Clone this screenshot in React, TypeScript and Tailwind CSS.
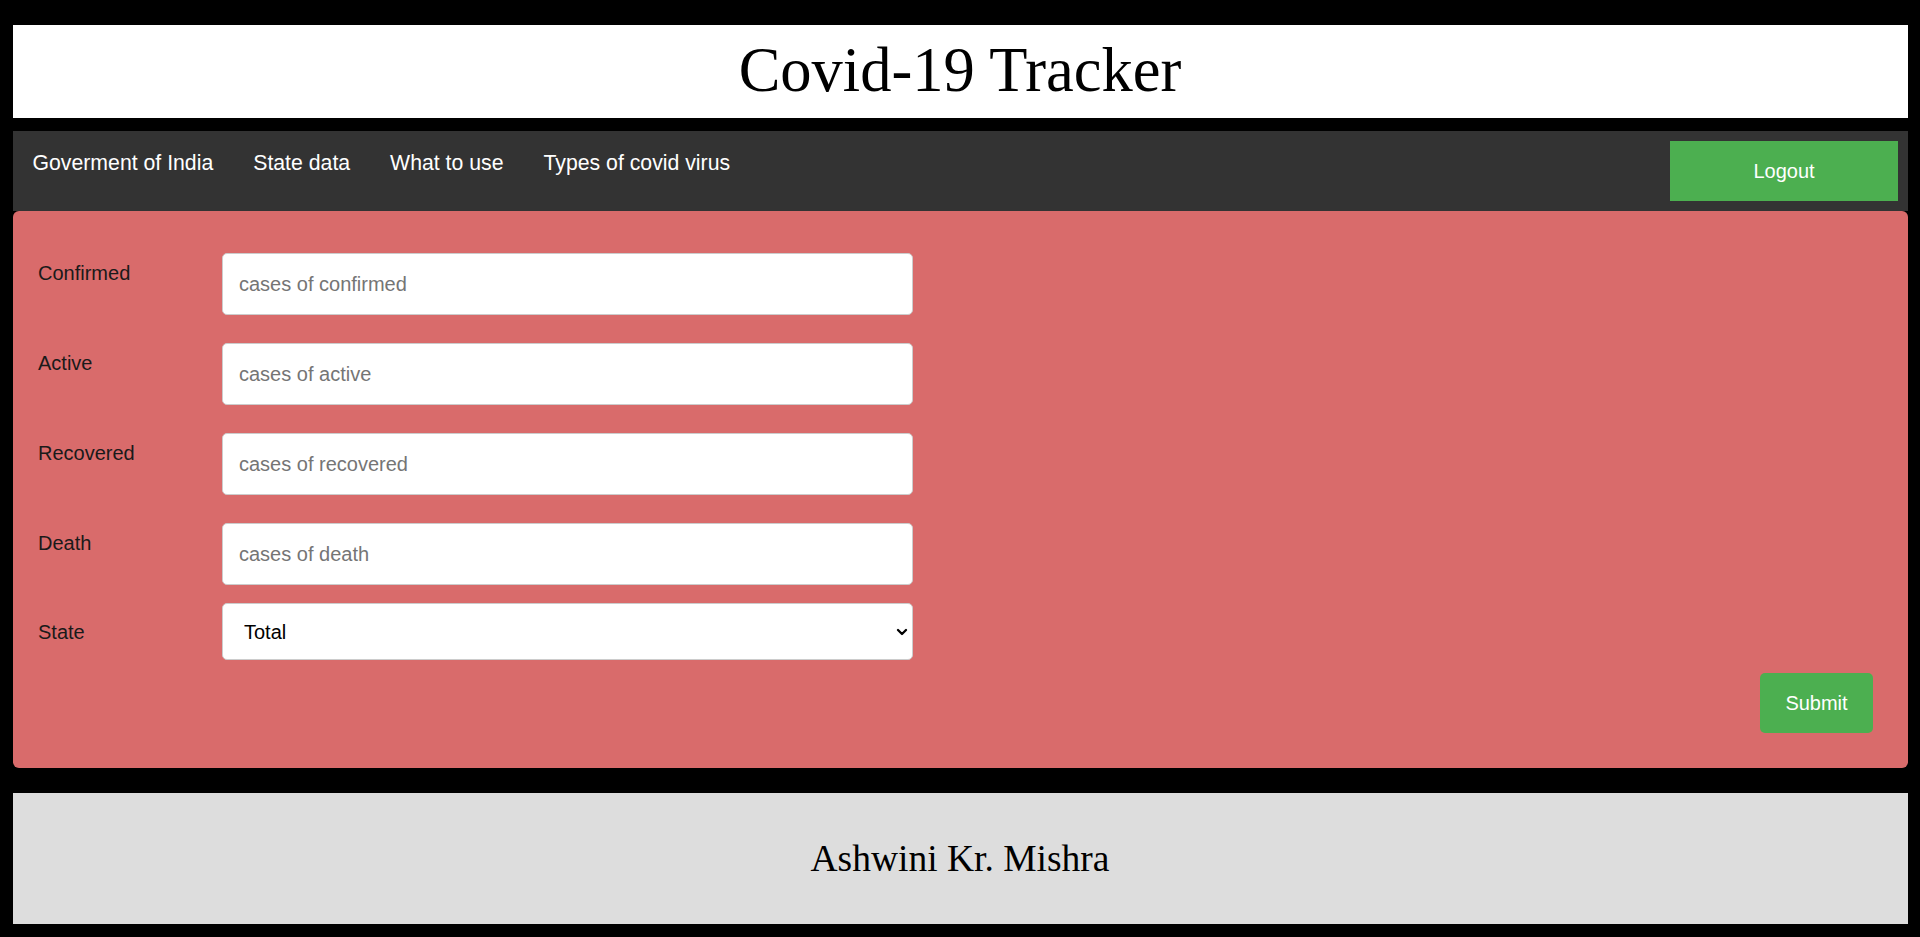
import { ChevronDown } from "lucide-react";

const links = ["Goverment of India", "State data", "What to use", "Types of covid virus"];

const fields = [
  { label: "Confirmed", placeholder: "cases of confirmed" },
  { label: "Active", placeholder: "cases of active" },
  { label: "Recovered", placeholder: "cases of recovered" },
  { label: "Death", placeholder: "cases of death" },
];

export default function App() {
  return (
    <div className="min-h-screen bg-black px-[12.5px] pt-[25px] pb-[13px] font-['Liberation_Sans',Arial,sans-serif]">
      {/* title bar */}
      <header className="h-[93px] bg-white pb-[3px] text-center">
        <h1 className="font-['Liberation_Serif','Times_New_Roman',serif] text-[62.5px] leading-[90px] text-black">
          Covid-19 Tracker
        </h1>
      </header>

      {/* top nav */}
      <nav className="mt-[13px] flex h-[80px] items-start justify-between bg-[#333]">
        <div className="flex">
          {links.map((l) => (
            <a key={l} href="#" className="px-[20px] pt-[20px] text-[21.25px] leading-[25px] text-white">
              {l}
            </a>
          ))}
        </div>
        <button className="mt-[10px] mr-[9.5px] h-[60px] w-[228px] bg-[#4caf50] text-[20px] text-white">
          Logout
        </button>
      </nav>

      {/* form */}
      <form className="flex flex-col rounded-[6px] bg-[#d96b6b] pt-[42px] pr-[34.5px] pb-[35px] pl-[25.5px]">
        {fields.map((f, i) => (
          <div key={f.label} className={`flex items-start ${i === 0 ? "" : "mt-[28px]"}`}>
            <label className="w-[184px] pt-[9px] text-[20px] leading-[23px] text-[#1a1a1a]">{f.label}</label>
            <input
              type="text"
              placeholder={f.placeholder}
              className="h-[62px] w-[691px] rounded-[5px] border border-[#ccc] bg-white px-[16px] text-[20px] text-black placeholder:text-[#757575]"
            />
          </div>
        ))}
        <div className="mt-[18px] flex items-center">
          <label className="w-[184px] pt-[2px] text-[20px] leading-[23px] text-[#1a1a1a]">State</label>
          <div className="relative w-[691px]">
            <select className="h-[57px] w-full appearance-none rounded-[5px] border border-[#ccc] bg-white px-[21px] text-[20px] text-black">
              <option>Total</option>
            </select>
            <ChevronDown
              size={16}
              strokeWidth={3.5}
              className="pointer-events-none absolute top-[21px] right-[3px] text-black"
            />
          </div>
        </div>
        <div className="mt-[13px] flex justify-end">
          <button type="button" className="h-[60px] w-[113px] rounded-[5px] bg-[#4caf50] text-[20px] text-white">
            Submit
          </button>
        </div>
      </form>

      {/* footer */}
      <footer className="mt-[25px] h-[131px] bg-[#ddd] text-center font-['Liberation_Serif','Times_New_Roman',serif] text-[37.5px] leading-[131px] text-black">
        Ashwini Kr. Mishra
      </footer>
    </div>
  );
}
